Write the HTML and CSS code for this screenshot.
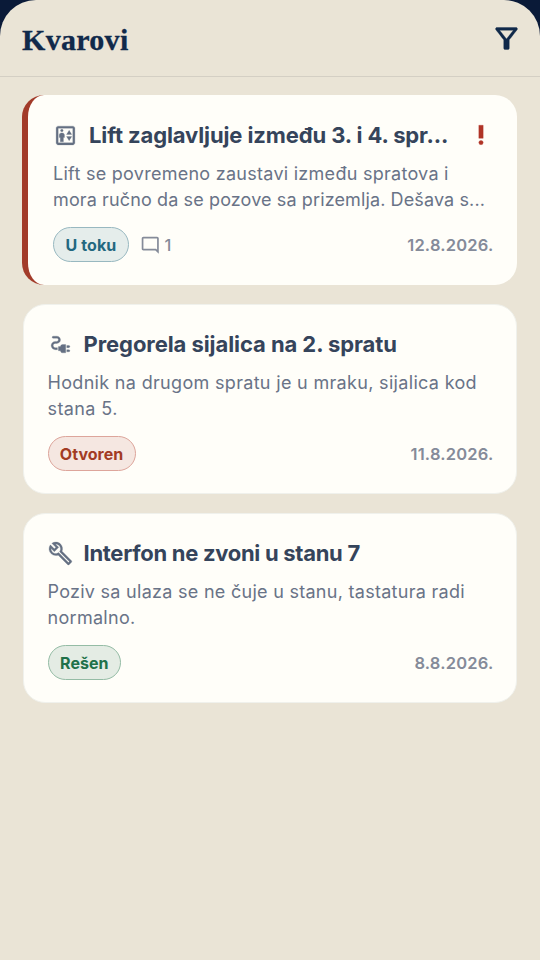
FILE: index.html
```
<!DOCTYPE html>
<html lang="sr-Latn">
<head>
<meta charset="utf-8">
<title>Kvarovi</title>
<link rel="stylesheet" href="styles.css">
</head>
<body>
<div class="screen">
  <header class="topbar">
    <h1>Kvarovi</h1>
    <svg class="filter" viewBox="0 0 24 24"><path d="M7 6h10l-5.01 6.3L7 6zm-2.75-.39C6.27 8.2 10 13 10 13v6c0 .55.45 1 1 1h2c.55 0 1-.45 1-1v-6s3.72-4.8 5.74-7.39c.51-.66.04-1.61-.79-1.61H5.04c-.83 0-1.3.95-.79 1.61z"/></svg>
  </header>
  <main class="list">
    <article class="card urgent">
      <div class="head">
        <svg class="kind" viewBox="0 0 24 24"><path d="M19 5v14H5V5h14m0-2H5c-1.1 0-2 .9-2 2v14c0 1.1.9 2 2 2h14c1.1 0 2-.9 2-2V5c0-1.1-.9-2-2-2z"/><path d="M10 18v-4h1v-2.500c0-1.100-.9-2-2-2H8c-1.100 0-2 .9-2 2V14h1v4z"/><circle cx="8.500" cy="7.250" r="1.250"/><path d="M18 11l-2.500-4-2.500 4zM13 13l2.500 4 2.500-4z"/></svg>
        <h2 class="t1">Lift zaglavljuje između 3. i 4. spr...</h2>
        <svg class="priority" viewBox="0 0 24 24"><circle cx="12" cy="19" r="2"/><path d="M10 3h4v12h-4z"/></svg>
      </div>
      <p><span class="l1">Lift se povremeno zaustavi između spratova i</span><span class="l2">mora ručno da se pozove sa prizemlja. Dešava s...</span></p>
      <div class="foot">
        <span class="chip progress">U toku</span>
        <span class="comments"><svg viewBox="0 0 24 24"><path d="M20 17.17L18.83 16H4V4h16v13.17zM20 2H4c-1.1 0-2 .9-2 2v12c0 1.1.9 2 2 2h14l4 4V4c0-1.1-.9-2-2-2z"/></svg>1</span>
        <time>12.8.2026.</time>
      </div>
    </article>
    <article class="card">
      <div class="head">
        <svg class="kind" viewBox="0 0 24 24"><path d="M21 14c0-.55-.45-1-1-1h-2v2h2c.55 0 1-.45 1-1zM20 17h-2v2h2c.55 0 1-.45 1-1s-.45-1-1-1zM12 14h-2v4h2c0 1.1.9 2 2 2h3v-8h-3c-1.1 0-2 .9-2 2z"/><path d="M5 13c0-1.1.9-2 2-2h1.500c1.930 0 3.500-1.570 3.500-3.500S10.430 4 8.500 4H5c-.55 0-1 .45-1 1s.45 1 1 1h3.500c.83 0 1.500.67 1.500 1.500S9.330 9 8.500 9H7c-2.210 0-4 1.790-4 4s1.790 4 4 4h2v-2H7c-1.100 0-2-.9-2-2z"/></svg>
        <h2 class="t2">Pregorela sijalica na 2. spratu</h2>
      </div>
      <p><span class="l3">Hodnik na drugom spratu je u mraku, sijalica kod</span><span class="l4">stana 5.</span></p>
      <div class="foot">
        <span class="chip open">Otvoren</span>
        <time>11.8.2026.</time>
      </div>
    </article>
    <article class="card">
      <div class="head">
        <svg class="kind" viewBox="0 0 24 24"><path d="M22.61 18.99l-9.08-9.08c.93-2.34.45-5.1-1.44-7C9.79.61 6.21.4 3.66 2.26L7.5 6.11 6.08 7.52 2.25 3.69C.39 6.23.6 9.82 2.9 12.11c1.86 1.86 4.57 2.35 6.89 1.48l9.11 9.11c.39.39 1.02.39 1.41 0l2.3-2.3c.4-.38.4-1.01 0-1.41zm-3 1.6l-9.46-9.46c-.61.45-1.29.72-2 .82-1.36.2-2.79-.21-3.83-1.25C3.37 9.76 2.93 8.5 3 7.26l3.09 3.09 4.24-4.24-3.09-3.09c1.24-.07 2.49.37 3.44 1.31 1.08 1.08 1.49 2.57 1.24 3.96-.12.71-.42 1.37-.88 1.96l9.45 9.45-.88.89z"/></svg>
        <h2 class="t3">Interfon ne zvoni u stanu 7</h2>
      </div>
      <p><span class="l5">Poziv sa ulaza se ne čuje u stanu, tastatura radi</span><span class="l6">normalno.</span></p>
      <div class="foot">
        <span class="chip solved">Rešen</span>
        <time>8.8.2026.</time>
      </div>
    </article>
  </main>
</div>
</body>
</html>
```
FILE: styles.css
```
* { box-sizing: border-box; margin: 0; }
body { background: #0a1a38; font-family: Inter, "Liberation Sans", sans-serif; }
svg { display: block; fill: currentColor; flex: none; }
.screen { height: 960px; background: #eae4d6; border-radius: 36px 36px 0 0; overflow: hidden; }
.topbar { height: 77px; display: flex; align-items: center; justify-content: space-between; padding: 0 17px 0 22px; border-bottom: 1px solid #d4cfc4; color: #10294a; }
h1 { font: bold 30px/40px "Liberation Serif", serif; letter-spacing: 0.3px; white-space: nowrap; padding-top: 3px; -webkit-text-stroke: 0.3px currentColor; }
.filter { width: 33px; height: 33px; stroke: currentColor; stroke-width: 0.25; }
.list { padding: 18px 23px; display: flex; flex-direction: column; gap: 19px; }
.card { height: 190px; background: #fffef9; border: 1px solid #f0f1ec; border-radius: 22px; padding: 23.5px 22.5px 21px 23.5px; }
.urgent { border-width: 0 0 0 6px; border-color: #a23b2a; margin-left: -1px; padding: 24.5px 23.5px 22px 25px; }
.head { height: 31px; display: flex; align-items: center; color: #657083; }
.kind { width: 25px; height: 25px; margin-right: 11px; stroke: currentColor; stroke-width: 0.25; }
h2 { font-size: 22px; line-height: 31px; font-weight: 700; color: #35445b; white-space: nowrap; }
.t1 { letter-spacing: -0.11px; }
.t2 { letter-spacing: -0.07px; }
.t3 { letter-spacing: -0.29px; }
.priority { width: 26px; height: 26px; margin-left: auto; color: #b03427; stroke: currentColor; stroke-width: 0.3; }
p { margin-top: 10.5px; font-size: 18px; line-height: 26.2px; color: #697387; }
p span { display: block; white-space: nowrap; }
.l1 { letter-spacing: 0.27px; }
.l2 { letter-spacing: 0.12px; }
.l3 { letter-spacing: 0.32px; }
.l4 { letter-spacing: 0.4px; }
.l5 { letter-spacing: 0.28px; }
.l6 { letter-spacing: 0.3px; }
.foot { margin-top: 14px; height: 35px; display: flex; align-items: center; font-size: 16.5px; color: #858b99; font-weight: 500; }
.chip { height: 35px; line-height: 34px; border: 1px solid; border-radius: 18px; text-align: center; font-size: 16px; font-weight: 700; white-space: nowrap; }
.progress { width: 76px; color: #236880; background: #e5edeb; border-color: #98b8c0; letter-spacing: 0.1px; }
.open { width: 88px; color: #a23b24; background: #f5e7e1; border-color: #dda59b; }
.solved { width: 73.5px; color: #207149; background: #e4ece4; border-color: #94bca5; }
.comments { display: flex; align-items: center; gap: 4.5px; margin-left: 10.5px; }
.comments svg { width: 20.5px; height: 20.5px; }
time { margin-left: auto; letter-spacing: 0.2px; font-weight: 600; white-space: nowrap; }
```
